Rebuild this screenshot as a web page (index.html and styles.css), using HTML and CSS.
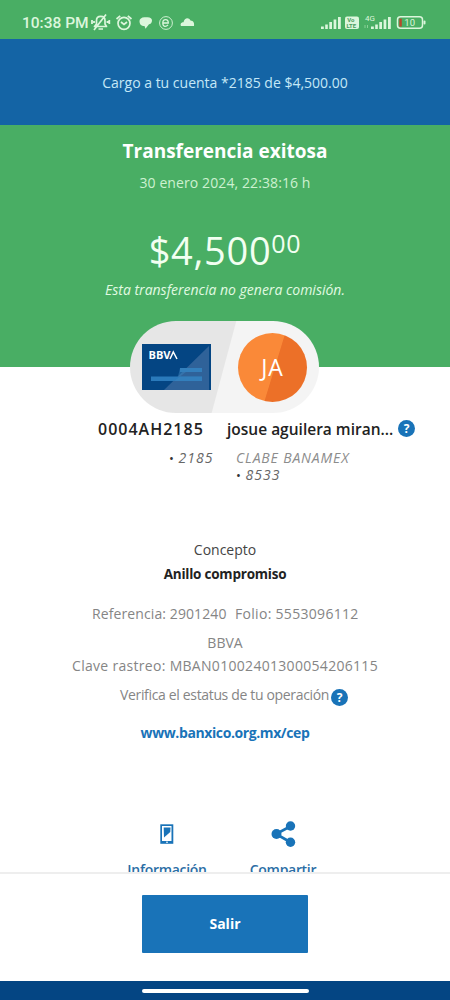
FILE: index.html
```html
<!DOCTYPE html>
<html lang="es">
<head>
<meta charset="utf-8">
<title>Transferencia exitosa</title>
<link rel="stylesheet" href="styles.css">
</head>
<body>
<div class="screen">
  <header class="status">
    <span class="clock">10:38 PM</span>
    <svg class="status-left" width="106" height="18" viewBox="90 14 106 18" fill="none" stroke="#dcf6dc" stroke-width="1.7">
      <path d="M94.500 26.500h12l-1.500-2.500v-3.500c0-5.500-8.500-5.500-8.500 0v3.500zM98.500 29h4.500M94 30L106 14.500" stroke-linejoin="round"/>
      <path d="M92 20v4M94 21v2M107.500 21v2M109.300 20v4" stroke-width="1.800"/>
      <circle cx="124" cy="23.300" r="6"/>
      <path d="M121 22l3 2.500 3-2.500M116.500 19l3.700-3.200M131.500 19l-3.700-3.200"/>
      <path d="M139.500 21c0-2 2-3.800 5-3.800h3c3 0 4.500 1.500 4.500 3.300 0 2.500-1.500 3.500-3 3.700l-3.500 4.500-1-2.700c-3.500 0-5-2-5-5z" fill="#dcf6dc" stroke="none"/>
      <circle cx="166" cy="23" r="6.400" stroke-width=".9"/>
      <path d="M163.500 23h4.800c0-4.500-5.500-4.500-5.500 0s3.500 3.800 5.200 1.800" stroke-width="1.300"/>
      <path d="M181 26c-1-2 .2-3.700 2.500-3.700 1-5 5.500-5 7-1.800 3 .2 4 2.700 3.500 5.500z" fill="#dcf6dc" stroke="none"/>
    </svg>
    <svg class="status-right" width="106" height="19" viewBox="320 13 106 19" fill="#dcf6dc">
      <path d="M321 26.500h2.800V29H321zM325.200 24.500h2.600V29h-2.600zM329.300 22h2.700v7h-2.700zM333.600 19.500h2.700V29h-2.700zM338 17h2.800v12H338z"/>
      <rect x="345" y="16.500" width="14" height="12.500" rx="2"/>
      <text x="347.200" y="22.300" font-size="6" font-weight="700" fill="#4b9d60">Vo</text>
      <text x="346.500" y="28" font-size="6" font-weight="700" fill="#4b9d60">LTE</text>
      <text x="365" y="21.300" font-size="8">4G</text>
      <path d="M365 25v3M367.500 25v3" stroke="#9bd9a4" stroke-width=".8"/>
      <path d="M371 26.500h2.800V29H371zM375.200 24.500h2.600V29h-2.600zM379.300 22h2.700v7h-2.700zM383.600 19.500h2.700V29h-2.700zM388 17h2.800v12H388z"/>
      <rect x="397.500" y="16.800" width="25" height="11.500" rx="3" fill="none" stroke="#dcf6dc" stroke-width="1.500"/>
      <rect x="399.300" y="18.600" width="2.500" height="8" fill="#b64a2c"/>
      <rect x="423.500" y="20.500" width="2" height="4" rx="1"/>
      <text x="404.300" y="26" font-size="9.500">10</text>
    </svg>
  </header>
  <div class="banner"><span class="banner-text">Cargo a tu cuenta *2185 de $4,500.00</span></div>
  <main class="content">
    <section class="hero">
      <h1 class="title">Transferencia exitosa</h1>
      <p class="date">30 enero 2024, 22:38:16 h</p>
      <p class="amount">$4,500<span class="cents">00</span></p>
      <p class="fee">Esta transferencia no genera comisión.</p>
    </section>
    <div class="pill">
      <svg class="bank-card" width="69" height="46" viewBox="0 0 69 46">
        <path d="M0 0h69v46H0z" fill="#044583"/>
        <path d="M22 46L67 2v44z" fill="#2f6299"/>
        <path d="M38 24h22v4H38zM9 32.500h51v4.500H9z" fill="#2a7abb"/>
        <path d="M38 24h22v4H44L32 37h28v-4.500H36z" fill="#3c83bd" opacity=".5"/>
        <text x="6.500" y="15" class="bank-name" textLength="22" lengthAdjust="spacingAndGlyphs">BBV</text>
        <path d="M28 15l3.300-7 3.700 7" fill="none" stroke="#fff" stroke-width="1.500"/>
      </svg>
      <div class="avatar"><span class="initials">JA</span></div>
    </div>
    <section class="accounts">
      <div class="origin">
        <p class="account-name origin-name">0004AH2185</p>
        <p class="account-detail origin-detail"><span class="dot">•</span> 2185</p>
      </div>
      <div class="target">
        <div class="target-head"><p class="account-name target-name">josue aguilera miran...</p><span class="help">?</span></div>
        <p class="account-detail clabe">CLABE BANAMEX</p>
        <p class="account-detail tail"><span class="dot">•</span> 8533</p>
      </div>
    </section>
    <section class="details">
      <p class="concept-label">Concepto</p>
      <p class="concept">Anillo compromiso</p>
      <p class="reference"><span class="reference-number">Referencia: 2901240</span><span class="folio">Folio: 5553096112</span></p>
      <p class="bank">BBVA</p>
      <p class="tracking">Clave rastreo: MBAN01002401300054206115</p>
      <p class="verify"><span class="verify-text">Verifica el estatus de tu operación</span><span class="help verify-help">?</span></p>
      <p class="link">www.banxico.org.mx/cep</p>
    </section>
    <nav class="actions">
      <div class="action">
        <svg width="26" height="28" viewBox="0 0 26 28"><path d="M6.300 4.300h13v19.500h-13z" fill="#1973b8"/><path d="M8 6h9.500v15H8z" fill="#fff"/><path d="M9.700 7.500h6.800l-.2 4.500L10 17.500z" fill="#1973b8"/><path d="M12 22.200h2" stroke="#fff"/></svg>
        <span class="action-label info">Información</span>
      </div>
      <div class="action">
        <svg width="26" height="28" viewBox="0 0 26 28" fill="#1973b8"><path d="M21 6L6 14l15 8.500" fill="none" stroke="#1973b8" stroke-width="2.600"/><circle cx="20.500" cy="6" r="4.700"/><circle cx="6.500" cy="14" r="5"/><circle cx="20.500" cy="22.300" r="4.700"/></svg>
        <span class="action-label share">Compartir</span>
      </div>
    </nav>
  </main>
  <footer class="footer"><button class="exit"><span class="exit-text">Salir</span></button></footer>
  <div class="gesture"><span class="handle"></span></div>
</div>
</body>
</html>
```
FILE: styles.css
```css
* { box-sizing: border-box; }
body { margin: 0; font-family: "Open Sans", "Noto Sans", sans-serif; }
p, h1 { margin: 0; white-space: nowrap; }
.screen { width: 450px; height: 1000px; display: flex; flex-direction: column; background: #fff; overflow: hidden; }
.status { height: 39px; flex: none; display: flex; background: #49ae64; color: #dcf6dc; font-family: Roboto, sans-serif; padding: 13px 24px 0 22px; }
.clock { width: 68px; font-size: 15.5px; font-weight: 500; line-height: 20px; white-space: nowrap; }
.status-left { margin-top: 1px; }
.status-right { margin-left: auto; }
.banner { height: 86px; flex: none; background: #1464a5; color: #c5e8f7; display: flex; align-items: center; justify-content: center; font-size: 14px; }
.content { height: 747px; flex: none; overflow: hidden; }
.hero { height: 242px; background: #49ae64; text-align: center; color: #e1fae2; padding-top: 12px; }
.title { font-size: 19px; line-height: 28px; font-weight: 700; color: #fff; }
.date { font-size: 14px; line-height: 20px; margin-top: 8px; font-weight: 400; color: #cdf1d1; letter-spacing: .1px; }
.amount { font-size: 38px; line-height: 50px; margin-top: 32px; font-weight: 400; color: #f2fff1; letter-spacing: .7px; }
.cents { font-size: 25px; line-height: 0; vertical-align: 12px; }
.fee { font-size: 14px; line-height: 20px; margin-top: 5px; font-style: italic; }
.pill { width: 189px; height: 92px; margin: -46px auto 0 130px; border-radius: 46px; background: linear-gradient(105deg, #e6e6e6 0 49.500%, #f4f4f4 50%); position: relative; display: flex; align-items: center; padding-left: 12px; gap: 27px; }
.bank-card { flex: none; }
.bank-name { fill: #fff; font: 700 10px "Open Sans", sans-serif; }
.avatar { width: 69px; height: 69px; border-radius: 50%; background: linear-gradient(107deg, #fa8938 0 52%, #ec7028 53%); color: #fff; display: flex; align-items: center; justify-content: center; font-size: 23px; font-weight: 400; letter-spacing: 1px; }
.accounts { display: flex; height: 124px; padding: 4px 0 0 98px; }
.origin { width: 129px; }
.account-name { font-size: 15.5px; line-height: 24px; font-weight: 600; color: #222; }
.origin-name { font-size: 16px; letter-spacing: 1px; }
.account-detail { font-size: 14px; line-height: 18px; font-style: italic; font-weight: 400; color: #666; letter-spacing: 1px; }
.origin-detail { padding: 8px 0 0 71px; }
.target-head { display: flex; align-items: center; height: 24px; margin-top: -1px; }
.target-name { width: 171px; padding-top: 1px; }
.help { width: 17px; height: 17px; border-radius: 50%; flex: none; background: #1973b8; color: #fff; font-size: 12px; font-weight: 700; line-height: 17px; text-align: center; }
.clabe { margin: 9px 0 0 9px; color: #8c8c8c; letter-spacing: .85px; }
.tail { margin: -1px 0 0 9px; }
.dot { font-size: 13px; font-style: normal; color: #333; letter-spacing: 0; }
.details { text-align: center; color: #858585; font-size: 14px; font-weight: 400; padding-top: 3px; line-height: 20px; }
.concept-label { color: #444; font-weight: 400; }
.concept { margin-top: 4px; color: #222; font-size: 13.5px; font-weight: 700; letter-spacing: -.22px; }
.reference { margin-top: 20px; display: flex; padding-left: 92px; }
.reference-number { width: 143px; text-align: left; letter-spacing: .1px; }
.folio { letter-spacing: .3px; }
.bank { margin-top: 9px; }
.tracking { margin-top: 3px; letter-spacing: .3px; }
.verify { margin-top: 9px; padding-left: 120px; display: flex; }
.verify-text { width: 211px; text-align: left; letter-spacing: -.34px; }
.verify-help { margin-top: 4px; }
.link { margin-top: 17px; color: #1973b8; font-weight: 700; letter-spacing: -.4px; }
.actions { display: flex; padding: 77px 0 0 109px; }
.action { width: 116px; flex: none; display: flex; flex-direction: column; align-items: center; }
.action-label { color: #2b6ea5; font-size: 14px; font-weight: 600; line-height: 20px; margin-top: 12px; white-space: nowrap; letter-spacing: -.3px; }
.footer { height: 109px; flex: none; background: #fff; border-top: 2px solid #eee; display: flex; justify-content: center; padding-top: 21px; }
.exit { width: 166px; height: 58px; border: 0; border-radius: 1px; background: #1973b8; color: #fff; font: 700 14px "Open Sans", sans-serif; padding: 0 0 2px; }
.gesture { height: 19px; flex: none; background: #044583; display: flex; justify-content: center; padding-top: 8px; }
.handle { width: 167px; height: 4px; border-radius: 2px; background: #fff; }
```
